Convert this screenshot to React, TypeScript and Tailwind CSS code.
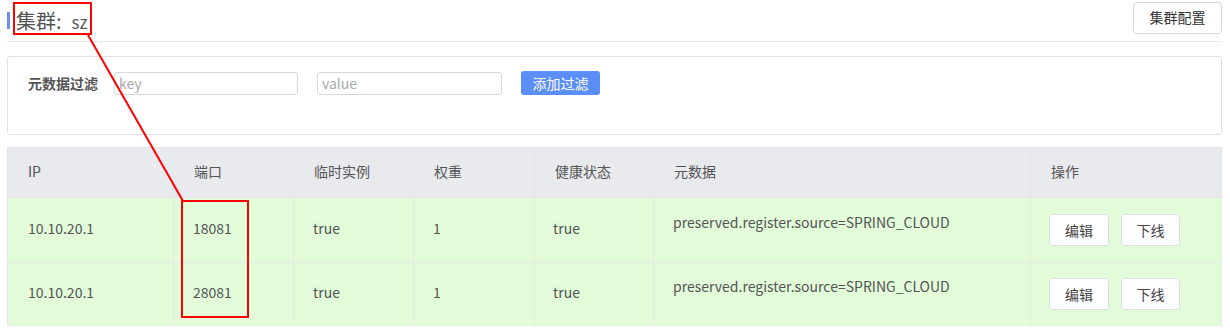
const COLS = [
  { key: "ip", label: "IP", w: 166 },
  { key: "port", label: "端口", w: 120 },
  { key: "ephemeral", label: "临时实例", w: 120 },
  { key: "weight", label: "权重", w: 121 },
  { key: "healthy", label: "健康状态", w: 119 },
  { key: "meta", label: "元数据", w: 377 },
  { key: "ops", label: "操作", w: 191 },
] as const;

const ROWS = [
  { ip: "10.10.20.1", port: "18081", ephemeral: "true", weight: "1", healthy: "true", meta: "preserved.register.source=SPRING_CLOUD", h: "h-[65px]" },
  { ip: "10.10.20.1", port: "28081", ephemeral: "true", weight: "1", healthy: "true", meta: "preserved.register.source=SPRING_CLOUD", h: "h-[63px]" },
];

const FONT = "font-['Noto_Sans_CJK_SC','Liberation_Sans',sans-serif]";

export default function App() {
  return (
    <div className={`relative w-[1230px] h-[329px] bg-white pl-[7px] pr-[8px] ${FONT}`}>
      {/* Header */}
      <div className="flex items-center justify-between h-[42px] border-b border-[#e6e8ec]">
        <div className="flex items-center h-[17px] border-l-[3px] border-[#6e8df5] pl-[6px]">
          <span className="text-[20px] leading-none text-[#555]">集群:</span>
          <span className="ml-[10px] mt-[2px] text-[17px] leading-none text-[#5a5a5a]">sz</span>
        </div>
        <button className="h-[32px] w-[89px] mb-[6px] rounded-[4px] border border-[#d4d7dd] bg-white text-[14px] text-[#333]">
          集群配置
        </button>
      </div>

      {/* Filter card */}
      <div className="mt-[14px] h-[79px] rounded-[3px] border border-[#dfe2e6] pl-[20px] pt-[14px]">
        <div className="flex items-center">
          <span className="text-[14px] font-bold text-[#555] w-[86px]">元数据过滤</span>
          <input
            placeholder="key"
            className="h-[23px] w-[184px] rounded-[3px] border border-[#d6d9de] px-[4px] text-[14px] placeholder:text-[#aaa] outline-none"
          />
          <input
            placeholder="value"
            className="ml-[19px] h-[23px] w-[185px] rounded-[3px] border border-[#d6d9de] px-[4px] text-[14px] placeholder:text-[#aaa] outline-none"
          />
          <button className="ml-[19px] h-[24px] w-[79px] rounded-[3px] bg-[#5b8ef7] text-[14px] text-white">
            添加过滤
          </button>
        </div>
      </div>

      {/* Table */}
      <table className="mt-[12px] w-[1215px] table-fixed border-collapse text-[14px] text-[#555]">
        <colgroup>
          {COLS.map((c) => (
            <col key={c.key} style={{ width: c.w }} />
          ))}
        </colgroup>
        <thead>
          <tr className="h-[50px] bg-[#e9eaee]">
            {COLS.map((c) => (
              <th key={c.key} className="border border-[#e3e5e9] pl-[20px] pb-[2px] text-left font-normal text-[#555]">
                {c.label}
              </th>
            ))}
          </tr>
        </thead>
        <tbody>
          {ROWS.map((r, i) => (
            <tr key={i} className={`${r.h} bg-[#e2fcda]`}>
              <td className="border border-[#e5eae3] pl-[20px] pb-[3px]">{r.ip}</td>
              <td className="border border-[#e5eae3] pl-[19px] pb-[3px]">{r.port}</td>
              <td className="border border-[#e5eae3] pl-[19px] pb-[3px]">{r.ephemeral}</td>
              <td className="border border-[#e5eae3] pl-[19px] pb-[3px]">{r.weight}</td>
              <td className="border border-[#e5eae3] pl-[18px] pb-[3px]">{r.healthy}</td>
              <td className="border border-[#e5eae3] pl-[19px] pb-[15px]">{r.meta}</td>
              <td className="border border-[#e5eae3] pl-[18px]">
                <div className="flex gap-[12px]">
                  <button className="h-[32px] w-[60px] rounded-[3px] border border-[#dcdfe3] bg-white text-[14px] text-[#444]">
                    编辑
                  </button>
                  <button className="h-[32px] w-[59px] rounded-[3px] border border-[#dcdfe3] bg-white text-[14px] text-[#444]">
                    下线
                  </button>
                </div>
              </td>
            </tr>
          ))}
        </tbody>
      </table>

      {/* Red annotation overlay */}
      <div className="pointer-events-none absolute left-[13px] top-[2px] h-[33px] w-[79px] border-2 border-[#f00]" />
      <div className="pointer-events-none absolute left-[181px] top-[200px] h-[118px] w-[68px] border-2 border-[#f00]" />
      <svg className="pointer-events-none absolute left-0 top-0" width="1230" height="329">
        <line x1="88" y1="35" x2="183" y2="201" stroke="#f00" strokeWidth="2" />
      </svg>
    </div>
  );
}
